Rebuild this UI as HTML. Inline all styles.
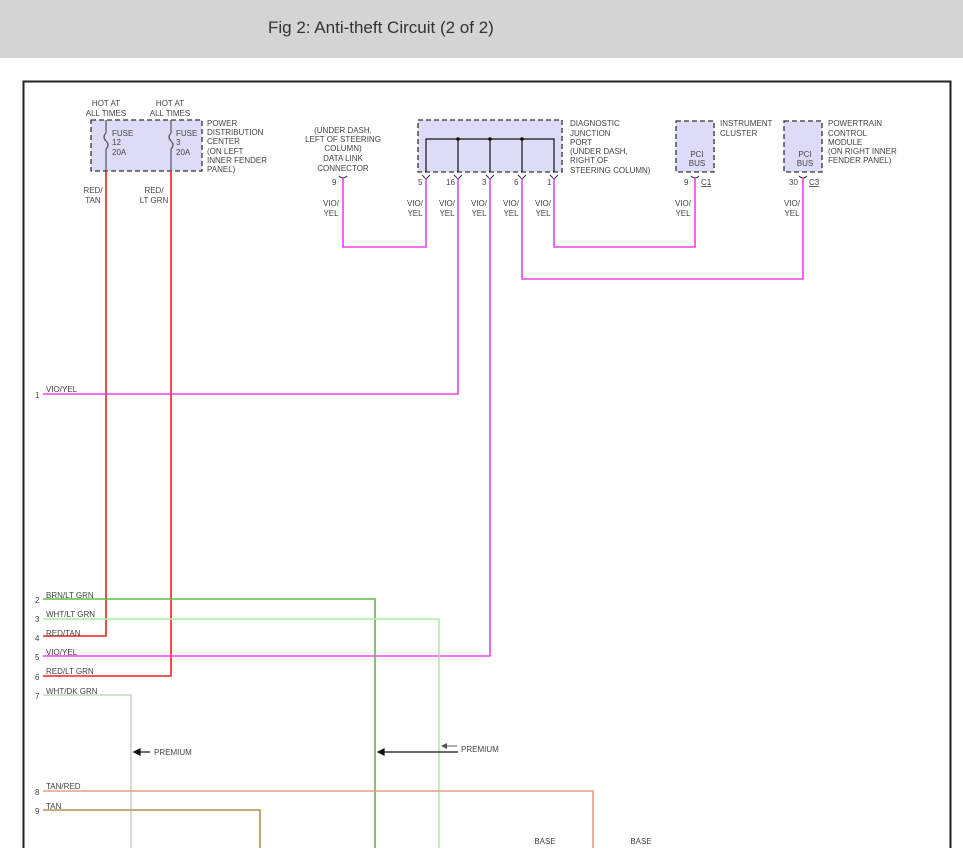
<!DOCTYPE html>
<html><head><style>
html,body{margin:0;padding:0;background:#fff;width:963px;height:867px;overflow:hidden;font-family:"Liberation Sans",sans-serif}
.hdr{position:absolute;left:0;top:0;width:963px;height:58px;background:#d4d4d4}
.hdr span{position:absolute;left:268px;top:18px;font-size:17px;color:#333}
svg{position:absolute;left:0;top:0}
text{font-family:"Liberation Sans",sans-serif;font-size:8px;fill:#444}
</style></head><body>
<div class="hdr"><span>Fig 2: Anti-theft Circuit (2 of 2)</span></div>
<svg width="963" height="867" viewBox="0 0 963 867">
<rect x="23.5" y="81.5" width="927" height="800" fill="none" stroke="#222" stroke-width="2"/>
<rect x="0" y="848" width="963" height="19" fill="#fff"/>
<!-- boxes -->
<g fill="#dcdcf8" stroke="#333" stroke-width="1.3" stroke-dasharray="5,3">
<rect x="91" y="120" width="111" height="51"/>
<rect x="418" y="120" width="144" height="52"/>
<rect x="676" y="121" width="38" height="51"/>
<rect x="784" y="121" width="38" height="51"/>
</g>
<!-- fuse internals -->
<g stroke="#555" stroke-width="1.2" fill="none">
<line x1="106" y1="120" x2="106" y2="133"/><path d="M106 133 q-4 4 0 8 q4 4 0 8"/><line x1="106" y1="149" x2="106" y2="171"/>
<line x1="171" y1="120" x2="171" y2="133"/><path d="M171 133 q-4 4 0 8 q4 4 0 8"/><line x1="171" y1="149" x2="171" y2="171"/>
</g>
<!-- DJP bus -->
<g stroke="#111" stroke-width="1.2" fill="none">
<path d="M426 172 V139 H554 V172"/>
<line x1="458" y1="139" x2="458" y2="172"/><line x1="490" y1="139" x2="490" y2="172"/><line x1="522" y1="139" x2="522" y2="172"/>
</g>
<g fill="#111"><circle cx="458" cy="139" r="1.8"/><circle cx="490" cy="139" r="1.8"/><circle cx="522" cy="139" r="1.8"/></g>
<!-- connector pin marks -->
<g stroke="#333" stroke-width="1" fill="none">
<path d="M422 175 l4 4 l4 -4"/><path d="M454 175 l4 4 l4 -4"/><path d="M486 175 l4 4 l4 -4"/><path d="M518 175 l4 4 l4 -4"/><path d="M550 175 l4 4 l4 -4"/>
<path d="M339 176 q4 4 8 0"/><path d="M691 176 q4 4 8 0"/><path d="M799 176 q4 4 8 0"/>
</g>
<!-- wires -->
<g fill="none" stroke-width="1.6">
<path d="M106 171 V636 H43" stroke="#f02020"/>
<path d="M171 171 V676 H43" stroke="#f02020"/>
<path d="M343 178 V247 H426 V178" stroke="#f040f0"/>
<path d="M458 178 V394 H43" stroke="#f040f0"/>
<path d="M490 178 V656 H43" stroke="#f040f0"/>
<path d="M554 178 V247 H695 V178" stroke="#f040f0"/>
<path d="M522 178 V279 H803 V178" stroke="#f040f0"/>
<path d="M43 599 H375 V848" stroke="#5cc040"/>
<path d="M43 619 H439 V848" stroke="#a8f0a0"/>
<path d="M43 695 H131 V848" stroke="#c0d8c0"/>
<path d="M43 791 H593 V848" stroke="#e0a080"/>
<path d="M43 810 H260 V848" stroke="#b09050"/>
</g>
<!-- arrows -->
<g stroke="#111" stroke-width="1.2" fill="#111">
<line x1="140" y1="752" x2="150" y2="752"/><path d="M134 752 l6 -3 v6z"/>
<line x1="384" y1="752" x2="458" y2="752"/><path d="M378 752 l6 -3 v6z"/>
<line x1="447" y1="746" x2="457" y2="746" stroke="#777"/><path d="M441 746 l6 -3 v6z" fill="#555" stroke="none"/>
</g>
<!-- texts -->
<g text-anchor="middle">
<text x="106" y="106">HOT AT</text><text x="106" y="116">ALL TIMES</text>
<text x="170" y="106">HOT AT</text><text x="170" y="116">ALL TIMES</text>
<text x="93" y="193">RED/</text><text x="93" y="203">TAN</text>
<text x="154" y="193">RED/</text><text x="154" y="203">LT GRN</text>
<text x="343" y="133">(UNDER DASH,</text><text x="343" y="142">LEFT OF STEERING</text><text x="343" y="151">COLUMN)</text><text x="343" y="161">DATA LINK</text><text x="343" y="171">CONNECTOR</text>
<text x="331" y="206">VIO/</text><text x="331" y="216">YEL</text>
<text x="415" y="206">VIO/</text><text x="415" y="216">YEL</text>
<text x="447" y="206">VIO/</text><text x="447" y="216">YEL</text>
<text x="479" y="206">VIO/</text><text x="479" y="216">YEL</text>
<text x="511" y="206">VIO/</text><text x="511" y="216">YEL</text>
<text x="543" y="206">VIO/</text><text x="543" y="216">YEL</text>
<text x="683" y="206">VIO/</text><text x="683" y="216">YEL</text>
<text x="792" y="206">VIO/</text><text x="792" y="216">YEL</text>
<text x="697" y="157">PCI</text><text x="697" y="166">BUS</text>
<text x="805" y="157">PCI</text><text x="805" y="166">BUS</text>
<text x="545" y="844">BASE</text><text x="641" y="844">BASE</text>
</g>
<text x="112" y="136">FUSE</text><text x="112" y="145">12</text><text x="112" y="155">20A</text>
<text x="176" y="136">FUSE</text><text x="176" y="145">3</text><text x="176" y="155">20A</text>
<text x="207" y="126">POWER</text><text x="207" y="135">DISTRIBUTION</text><text x="207" y="144">CENTER</text><text x="207" y="154">(ON LEFT</text><text x="207" y="163">INNER FENDER</text><text x="207" y="172">PANEL)</text>
<text x="570" y="126">DIAGNOSTIC</text><text x="570" y="136">JUNCTION</text><text x="570" y="145">PORT</text><text x="570" y="154">(UNDER DASH,</text><text x="570" y="163">RIGHT OF</text><text x="570" y="173">STEERING COLUMN)</text>
<text x="720" y="126">INSTRUMENT</text><text x="720" y="136">CLUSTER</text>
<text x="828" y="126">POWERTRAIN</text><text x="828" y="136">CONTROL</text><text x="828" y="145">MODULE</text><text x="828" y="154">(ON RIGHT INNER</text><text x="828" y="163">FENDER PANEL)</text>
<text x="332" y="185">9</text><text x="418" y="185">5</text><text x="446" y="185">16</text><text x="482" y="185">3</text><text x="514" y="185">6</text><text x="547" y="185">1</text>
<text x="684" y="185">9</text><text x="701" y="185" text-decoration="underline">C1</text>
<text x="789" y="185">30</text><text x="809" y="185" text-decoration="underline">C3</text>
<text x="35" y="398">1</text><text x="46" y="392">VIO/YEL</text>
<text x="35" y="603">2</text><text x="46" y="598">BRN/LT GRN</text>
<text x="35" y="622">3</text><text x="46" y="617">WHT/LT GRN</text>
<text x="35" y="641">4</text><text x="46" y="636">RED/TAN</text>
<text x="35" y="660">5</text><text x="46" y="655">VIO/YEL</text>
<text x="35" y="680">6</text><text x="46" y="674">RED/LT GRN</text>
<text x="35" y="699">7</text><text x="46" y="694">WHT/DK GRN</text>
<text x="35" y="795">8</text><text x="46" y="789">TAN/RED</text>
<text x="35" y="814">9</text><text x="46" y="809">TAN</text>
<text x="154" y="755">PREMIUM</text>
<text x="461" y="752">PREMIUM</text>
</svg>
</body></html>
